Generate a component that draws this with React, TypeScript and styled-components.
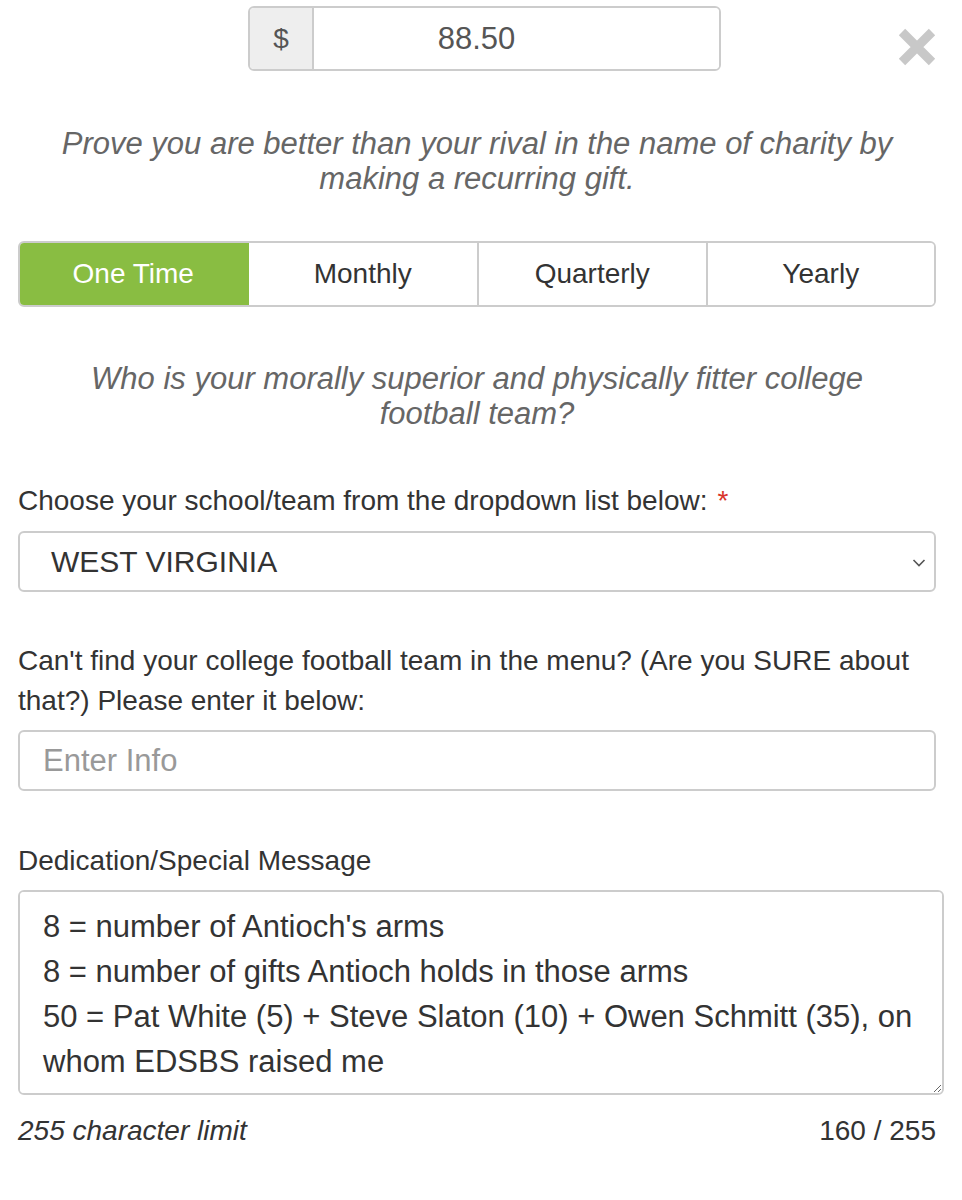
import React from 'react'
import styled, { createGlobalStyle } from 'styled-components'

const GlobalStyle = createGlobalStyle`
  body {
    margin: 0;
    background: #fff;
    font-family: 'Liberation Sans', Arial, sans-serif;
    color: #333;
  }
`

const tabs = ['One Time', 'Monthly', 'Quarterly', 'Yearly']

const message = `8 = number of Antioch's arms
8 = number of gifts Antioch holds in those arms
50 = Pat White (5) + Steve Slaton (10) + Owen Schmitt (35), on whom EDSBS raised me`

const Page = styled.div`
  position: relative;
  width: 918px;
  padding: 6px 0 40px 18px;
`

const AmountGroup = styled.div`
  display: flex;
  width: 473px;
  height: 65px;
  margin-left: 230px;
  border: 2px solid #ccc;
  border-radius: 6px;
  box-sizing: border-box;
  overflow: hidden;
`

const Addon = styled.div`
  flex: 0 0 64px;
  display: flex;
  align-items: center;
  justify-content: center;
  background: #eee;
  border-right: 2px solid #ccc;
  box-sizing: border-box;
  font-size: 28px;
  color: #555;
`

const AmountInput = styled.input`
  flex: 1;
  min-width: 0;
  border: none;
  outline: none;
  font-family: inherit;
  font-size: 31px;
  color: #555;
  text-align: center;
  padding: 0 80px 0 0;
`

const CloseButton = styled.button`
  position: absolute;
  top: 27px;
  right: -1px;
  width: 40px;
  height: 40px;
  padding: 0;
  border: none;
  background: none;
`

const Lead = styled.p<{ $top: number }>`
  margin: ${(p) => p.$top}px 0 0;
  font-size: 31px;
  line-height: 35px;
  font-style: italic;
  color: #666;
  text-align: center;
  padding: 0 20px;
`

const TabRow = styled.div`
  display: grid;
  grid-template-columns: repeat(4, 1fr);
  margin-top: 45px;
  height: 66px;
  border: 2px solid #ccc;
  border-radius: 6px;
  box-sizing: border-box;
  overflow: hidden;
`

const Tab = styled.button<{ $active?: boolean }>`
  border: none;
  border-left: ${(p) => (p.$active ? 'none' : '2px solid #ccc')};
  margin: ${(p) => (p.$active ? '-2px 0 -2px -2px' : '0')};
  background: ${(p) => (p.$active ? '#89bd42' : '#fff')};
  color: ${(p) => (p.$active ? '#fff' : '#333')};
  font-family: inherit;
  font-size: 28px;
  &:first-child + & {
    border-left: none;
  }
`

const Label = styled.label<{ $top: number }>`
  display: block;
  margin-top: ${(p) => p.$top}px;
  font-size: 28px;
  line-height: 40px;
  color: #333;
`

const Required = styled.span`
  color: #d9342b;
  margin-left: 10px;
`

const SelectBox = styled.div`
  position: relative;
  margin-top: 10px;
  height: 61px;
  border: 2px solid #ccc;
  border-radius: 6px;
  box-sizing: border-box;
  display: flex;
  align-items: center;
  padding: 0 31px;
  font-size: 30px;
  color: #333;
`

const Chevron = styled.svg`
  position: absolute;
  right: 8px;
  top: 25px;
`

const TextInput = styled.input`
  display: block;
  width: 100%;
  margin-top: 9px;
  height: 61px;
  border: 2px solid #ccc;
  border-radius: 6px;
  box-sizing: border-box;
  padding: 0 23px;
  font-family: inherit;
  font-size: 31px;
  color: #333;
  &::placeholder {
    color: #999;
  }
`

const MessageArea = styled.textarea`
  display: block;
  width: 926px;
  height: 205px;
  margin-top: 9px;
  border: 2px solid #ccc;
  border-radius: 6px;
  box-sizing: border-box;
  padding: 12px 23px;
  font-family: inherit;
  font-size: 31px;
  line-height: 45px;
  color: #333;
  resize: vertical;
`

const Footer = styled.div`
  display: flex;
  justify-content: space-between;
  margin-top: 20px;
  font-size: 28px;
  color: #333;
`

const Hint = styled.span`
  font-style: italic;
`

export default function App() {
  return (
    <Page>
      <GlobalStyle />
      <AmountGroup>
        <Addon>$</Addon>
        <AmountInput defaultValue="88.50" />
      </AmountGroup>
      <CloseButton aria-label="Close">
        <svg width="40" height="40" viewBox="0 0 40 40">
          <path d="M5 5 L35 35 M35 5 L5 35" stroke="#c8c8c8" strokeWidth="9" />
        </svg>
      </CloseButton>
      <Lead $top={55}>
        Prove you are better than your rival in the name of charity by making a recurring gift.
      </Lead>
      <TabRow>
        {tabs.map((t, i) => (
          <Tab key={t} $active={i === 0}>
            {t}
          </Tab>
        ))}
      </TabRow>
      <Lead $top={54}>
        Who is your morally superior and physically fitter college football team?
      </Lead>
      <Label $top={50}>
        Choose your school/team from the dropdown list below:<Required>*</Required>
      </Label>
      <SelectBox>
        WEST VIRGINIA
        <Chevron width="14" height="10" viewBox="0 0 14 10">
          <path d="M1.5 2 L7 7.5 L12.5 2" fill="none" stroke="#555" strokeWidth="1.6" />
        </Chevron>
      </SelectBox>
      <Label $top={49}>
        Can't find your college football team in the menu? (Are you SURE about that?) Please
        enter it below:
      </Label>
      <TextInput placeholder="Enter Info" />
      <Label $top={50}>Dedication/Special Message</Label>
      <MessageArea defaultValue={message} />
      <Footer>
        <Hint>255 character limit</Hint>
        <span>160 / 255</span>
      </Footer>
    </Page>
  )
}
